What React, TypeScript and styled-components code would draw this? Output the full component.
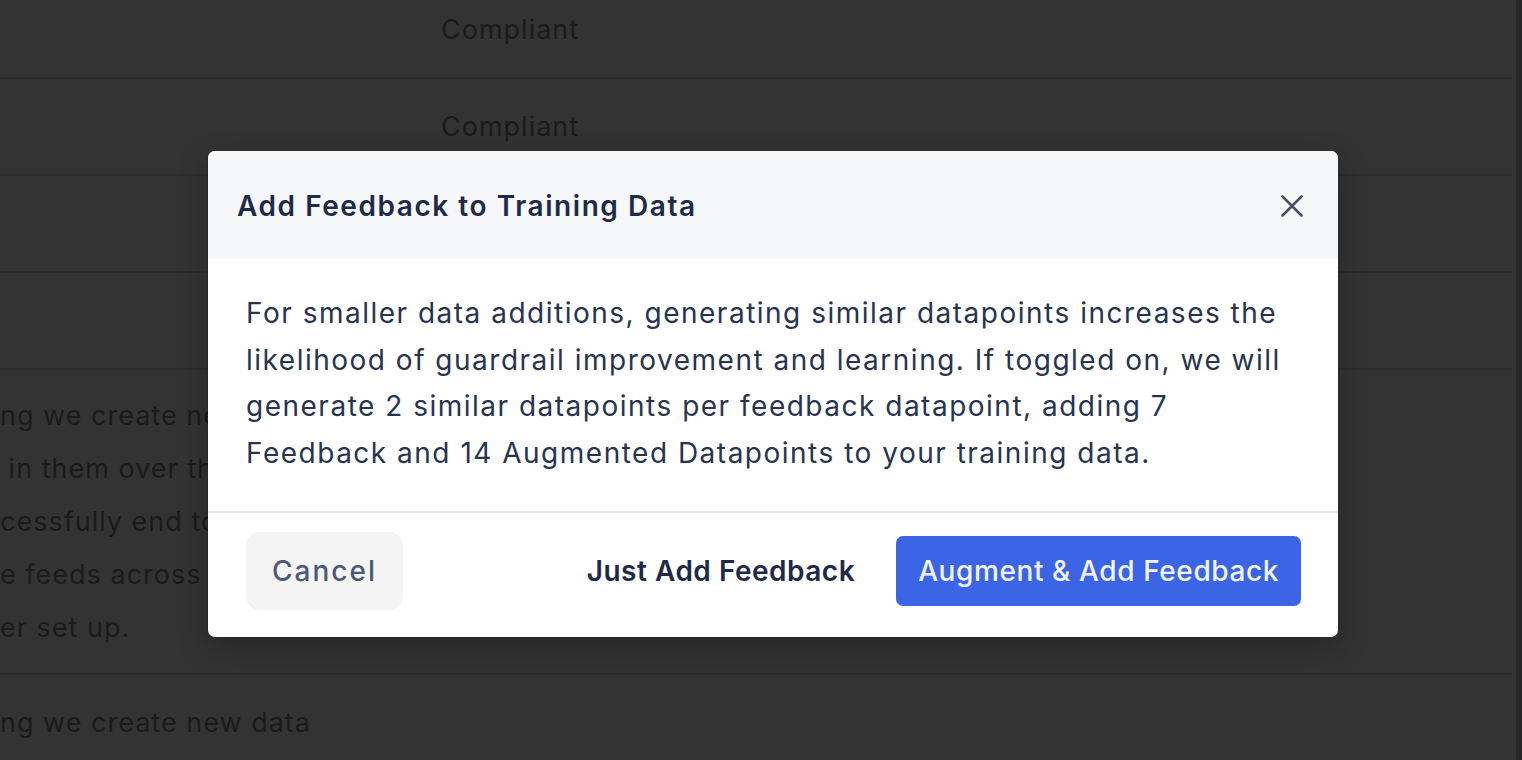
import styled, { createGlobalStyle } from "styled-components"

const GlobalStyle = createGlobalStyle`
html, body {
  margin : 0;
  padding : 0;
  height : 100%;
  overflow : hidden;
  background : #333333;
}
#root {
  height : 100%;
}
* {
  box-sizing : border-box;
}
`

const Page = styled.div`
display : flex;
width : 100%;
height : 760px;
overflow : hidden;
position : relative;
font-family : Inter, "Noto Sans", sans-serif;
`

const Main = styled.div`
flex : 1;
background : #333333;
overflow : hidden;
`

const Scrollbar = styled.div`
width : 6px;
background : #262626;
`

const Table = styled.div`
margin-top : -18px;
margin-right : 4px;
`

const Row = styled.div<{ $tall?: boolean }>`
display : grid;
grid-template-columns : 441px 1fr;
align-items : center;
min-height : 97px;
padding : ${p => (p.$tall ? "19px 0" : "0")};
border-bottom : 2px solid #2c2c2c;
color : #1b1b1b;
font-size : 27px;
line-height : 53px;
letter-spacing : 1px;
`

const Cell = styled.div`
white-space : nowrap;
overflow : hidden;
`

const Line = styled.div`
white-space : pre;
`

const Modal = styled.div`
position : absolute;
left : 208px;
top : 151px;
width : 1130px;
background : #ffffff;
border-radius : 7px;
overflow : hidden;
box-shadow : 0 10px 30px rgba(0, 0, 0, 0.25), 0 0 0 1px rgba(0, 0, 0, 0.05);
`

const Header = styled.div`
height : 108px;
display : flex;
align-items : center;
justify-content : space-between;
padding : 2px 35px 0 29px;
background : #f6f7f9;
`

const Title = styled.h2`
margin : 0;
font-size : 28px;
font-weight : 600;
letter-spacing : 1.55px;
color : #1f2a48;
`

const CloseButton = styled.button`
display : flex;
align-items : center;
justify-content : center;
width : 22px;
height : 22px;
padding : 0;
border : none;
background : transparent;
color : #4b5262;
cursor : pointer;
`

const Body = styled.div`
padding : 31px 38px 35px;
font-size : 28px;
line-height : 46.5px;
letter-spacing : 1.5px;
white-space : nowrap;
color : #283350;
border-bottom : 2px solid #e6e8ec;
`

const Footer = styled.div`
display : flex;
align-items : center;
padding : 19px 37px 27px 38px;
gap : 19px;
`

const Button = styled.button<{ $variant: "muted" | "ghost" | "primary" }>`
font-family : Inter, "Noto Sans", sans-serif;
font-size : 28px;
border : none;
cursor : pointer;
white-space : nowrap;
${p =>
  p.$variant === "muted"
    ? `
  height : 78px;
  padding : 0 26px;
  border-radius : 14px;
  background : #f4f4f5;
  color : #4d5878;
  font-weight : 500;
  letter-spacing : 2px;
  margin-right : auto;
`
    : p.$variant === "ghost"
    ? `
  height : 70px;
  padding : 0 22px;
  background : transparent;
  color : #1f2a48;
  font-weight : 600;
  letter-spacing : 0.5px;
`
    : `
  height : 70px;
  padding : 0 22px;
  border-radius : 7px;
  background : #3b65e4;
  color : #f2f5ff;
  font-weight : 500;
  letter-spacing : 0.6px;
`}
`

const CloseIcon = () => (
  <svg width="22" height="22" viewBox="0 0 22 22" fill="none" stroke="currentColor" strokeWidth="2.6" strokeLinecap="round">
    <path d="M1.5 1.5 L20.5 20.5 M20.5 1.5 L1.5 20.5" />
  </svg>
)

const App = () => {
  return (
    <Page>
      <GlobalStyle />
      <Main>
        <Table>
          <Row>
            <Cell />
            <Cell>Compliant</Cell>
          </Row>
          <Row>
            <Cell />
            <Cell>Compliant</Cell>
          </Row>
          <Row>
            <Cell />
            <Cell />
          </Row>
          <Row>
            <Cell />
            <Cell />
          </Row>
          <Row $tall>
            <Cell>
              <Line>ng we create ne</Line>
              <Line> in them over th</Line>
              <Line>cessfully end to</Line>
              <Line>e feeds across t</Line>
              <Line>er set up.</Line>
            </Cell>
            <Cell />
          </Row>
          <Row $tall>
            <Cell>
              <Line>ng we create new data</Line>
            </Cell>
            <Cell />
          </Row>
        </Table>
      </Main>
      <Scrollbar />
      <Modal>
        <Header>
          <Title>Add Feedback to Training Data</Title>
          <CloseButton aria-label="Close">
            <CloseIcon />
          </CloseButton>
        </Header>
        <Body>
          For smaller data additions, generating similar datapoints increases the
          <br />
          likelihood of guardrail improvement and learning. If toggled on, we will
          <br />
          generate 2 similar datapoints per feedback datapoint, adding 7
          <br />
          Feedback and 14 Augmented Datapoints to your training data.
        </Body>
        <Footer>
          <Button $variant="muted">Cancel</Button>
          <Button $variant="ghost">Just Add Feedback</Button>
          <Button $variant="primary">Augment &amp; Add Feedback</Button>
        </Footer>
      </Modal>
    </Page>
  )
}

export default App
